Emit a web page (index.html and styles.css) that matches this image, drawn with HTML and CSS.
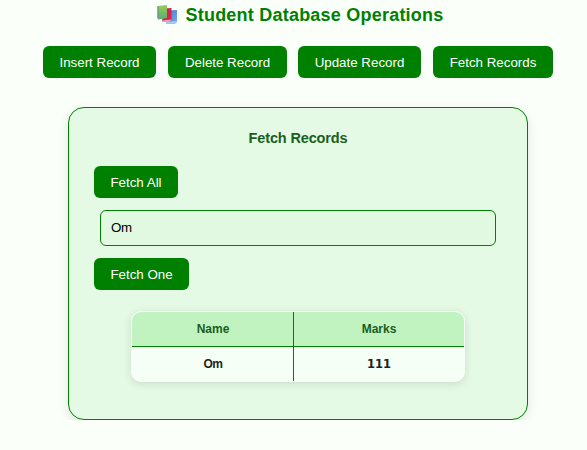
FILE: index.html
```html
<!DOCTYPE html>
<html lang="en">
<head>
<meta charset="utf-8">
<title>Student Database Operations</title>
<link rel="stylesheet" href="styles.css">
</head>
<body>
<main class="page">
  <h1 class="title">
    <svg class="books" width="22" height="20" viewBox="0 0 22 20" aria-hidden="true">
      <defs>
        <linearGradient id="g" x1="0" y1="0" x2="0" y2="1"><stop offset="0" stop-color="#93cf51"/><stop offset="1" stop-color="#57ad79"/></linearGradient>
        <linearGradient id="b" x1="0" y1="0" x2="1" y2="1"><stop offset="0" stop-color="#4a78c4"/><stop offset="1" stop-color="#75aaf0"/></linearGradient>
      </defs>
      <path d="M10 5.500 20 5v12l-2 1.800H9z" fill="url(#b)"/>
      <path d="M9 18.800V17l11-1v1l-2 1.800z" fill="#a8c9f0"/>
      <path d="M6 3.500 14.500 3v11.500L12.500 17H5z" fill="#d8234f"/>
      <path d="M5 17v-1.500l9.500-1-2 2.500z" fill="#e9a5b4"/>
      <path d="M0.500 1 10 0v13L1.500 14.500 0.500 13z" fill="url(#g)"/>
      <path d="M0.500 1v12l1 1.500V1z" fill="#6d8b86"/>
    </svg>
    <span>Student Database Operations</span>
  </h1>
  <nav class="actions">
    <button class="btn insert">Insert Record</button>
    <button class="btn delete">Delete Record</button>
    <button class="btn update">Update Record</button>
    <button class="btn fetch">Fetch Records</button>
  </nav>
  <section class="panel">
    <h2 class="subtitle">Fetch Records</h2>
    <button class="btn fetch-all">Fetch All</button>
    <input class="field" type="text" value="Om" aria-label="Name">
    <button class="btn fetch-one">Fetch One</button>
    <table class="records">
      <thead><tr><th class="name">Name</th><th>Marks</th></tr></thead>
      <tbody><tr><td class="name">Om</td><td class="marks">111</td></tr></tbody>
    </table>
  </section>
</main>
</body>
</html>
```
FILE: styles.css
```css
* { box-sizing: border-box; }
body {
  margin: 0;
  background: #fafffa;
  font-family: "Liberation Sans", Arial, sans-serif;
  overflow: hidden;
}
.page {
  width: 596px;
  display: flex;
  flex-direction: column;
  align-items: center;
}
.title {
  display: flex;
  align-items: center;
  gap: 7px;
  height: 20px;
  margin: 5px 0 21px;
  padding-left: 4px;
  color: #008000;
  font-size: 18px;
  line-height: 20px;
  letter-spacing: 0.22px;
  white-space: nowrap;
}
.books { flex: none; }
.actions { display: flex; gap: 12px; }
.btn {
  display: block;
  height: 32px;
  padding: 1px 0 0;
  border: 0;
  border-radius: 6px;
  background: #008000;
  color: #fff;
  font: 13.333px/31px "Liberation Sans", Arial, sans-serif;
  white-space: nowrap;
}
.insert { width: 113px; }
.delete { width: 119px; }
.update { width: 123px; margin-left: -1px; }
.fetch { width: 120px; }
.panel {
  width: 460px;
  height: 313px;
  margin-top: 29px;
  padding: 20px 25px;
  border: 1px solid #008000;
  border-radius: 16px;
  background: #e5fae5;
  box-shadow: 0 4px 12px rgba(0, 0, 0, 0.1);
}
.subtitle {
  height: 20px;
  margin: 0 0 18px;
  color: #1b5e20;
  font-size: 14.5px;
  line-height: 20px;
  letter-spacing: -0.15px;
  text-align: center;
}
.fetch-all { width: 84px; }
.field {
  display: block;
  width: 396px;
  height: 36px;
  margin: 12px 6px;
  padding: 0 10px 2px;
  border: 1px solid #008000;
  border-radius: 6px;
  background: #e0f9e0;
  color: #000;
  font: 13.333px "Liberation Sans", Arial, sans-serif;
  letter-spacing: -0.4px;
}
.fetch-one { width: 95px; }
.records {
  width: 334px;
  height: 71px;
  margin: 21px 37px 0;
  border: 1px solid #f5fff5;
  border-radius: 10px;
  border-spacing: 0;
  table-layout: fixed;
  overflow: hidden;
  background: #f5fff5;
  box-shadow: 0 2px 8px rgba(0, 0, 0, 0.12);
  color: #222;
  font-size: 12px;
  font-weight: bold;
  text-align: center;
}
.records th {
  height: 35px;
  padding: 0;
  border-bottom: 1px solid #008000;
  background: #c1f3c1;
  color: #1b5e20;
}
.records td { height: 34px; padding: 0; }
.records .name { width: 162px; padding-left: 1px; border-right: 1px solid #008000; }
.records td.name { letter-spacing: -0.4px; }
.records .marks { font-family: "DejaVu Sans", sans-serif; font-size: 11.5px; }
```
